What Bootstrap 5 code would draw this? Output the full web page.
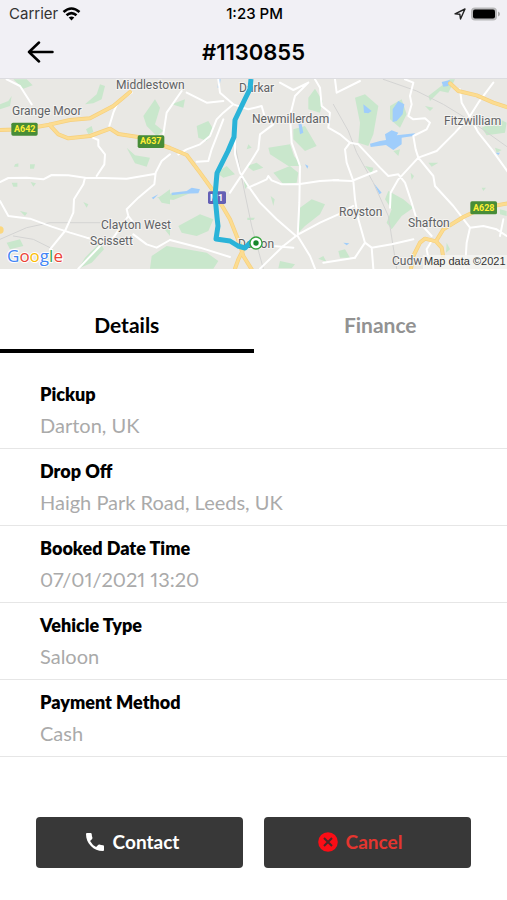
<!DOCTYPE html>
<html lang="en">
<head>
<meta charset="utf-8">
<meta name="viewport" content="width=device-width, initial-scale=1">
<title>Booking #1130855</title>
<link href="https://cdn.jsdelivr.net/npm/bootstrap@5.3.0/dist/css/bootstrap.min.css" rel="stylesheet">
<style>
body{font-family:Lato,"Open Sans",sans-serif;color:#000;background:#fff}
.top-area{background:#f1f0f5;border-bottom:1px solid #dcdce0}
.status-line{font:500 15px/28px Inter,Roboto,sans-serif;padding:0 7px 0 9px}
.status-line .carrier{font-weight:400;color:#333}
.title-line{height:50px;padding:0 27px}
.title-line h1{font:600 22px/48px Inter,sans-serif}
.back-btn{width:27px;height:48px}
.side-slot{width:27px}
.map-view{display:block;width:100%;height:auto;background:#e9e8e4}
.map-view text{font-family:Roboto,sans-serif;font-size:12px;fill:#5f6265;stroke:#f4f3f0;stroke-width:2px;paint-order:stroke}
.map-view .road-no{font-size:9px;font-weight:700;fill:#ffee35;stroke:none}
.map-view .motorway{fill:#fff}
.map-view .credit{font-family:"Liberation Sans",sans-serif;font-size:11px;fill:#333}
.map-view .brand{font-family:"Open Sans",sans-serif;font-size:17px;font-weight:500;stroke:#fff}
.view-tabs{margin-top:27px}
.view-tabs .nav-link{border-radius:0;border-bottom:4px solid transparent;padding:14px 0 10px;font-size:21px;line-height:29px;font-weight:700;color:#929292}
.view-tabs .nav-link.active{background:none;color:#000;border-color:#000}
.trip-info{padding-top:19px}
.trip-info .list-group-item,.trip-info .list-group-item:last-child{padding:10px 40px 6px;border-width:0 0 1px;border-color:#e6e6e6;min-height:77px}
.trip-info dt{font-size:18px;line-height:24px;font-weight:800;color:#000}
.trip-info dd{font-size:20px;line-height:28px;margin:5px 0 0;color:#aaa;font-variant-numeric:proportional-nums}
.action-row{gap:21px;padding:60px 36px 30px}
.action-btn{background:#383838;color:#fff;font-size:19px;line-height:27px;font-weight:700;border-radius:4px;padding:11px 27px 13px 12px;border:0;gap:8px}
.action-btn:hover{background:#444;color:#fff}
.action-btn.stop-btn,.action-btn.stop-btn:hover{color:#e5352f}
</style>
<script src="https://cdn.jsdelivr.net/npm/bootstrap@5.3.0/dist/js/bootstrap.bundle.min.js"></script>
</head>
<body>
<header class="top-area">
  <div class="status-line row g-0">
    <div class="col carrier d-flex align-items-center gap-1">Carrier
      <svg width="19" height="14" viewBox="0 0 18 14" fill="none" stroke="#000" stroke-width="2.6" aria-hidden="true"><path d="M1 5Q9-2 17 5M4 8.3Q9 4 14 8.3"/><path d="M9 13.5L6.2 10.5Q9 8.4 11.8 10.5Z" fill="#000" stroke="none"/></svg>
    </div>
    <div class="col-auto">1:23 PM</div>
    <div class="col d-flex align-items-center justify-content-end gap-1">
      <svg width="12" height="12" viewBox="0 0 12 12" fill="none" stroke="#222" stroke-width="1.4" stroke-linejoin="round" aria-hidden="true"><path d="M1 5.8L11 1L6.5 11L5.8 6.2Z"/></svg>
      <svg width="30" height="14" viewBox="0 0 30 14" aria-hidden="true"><rect x="1" y=".5" width="26" height="13" rx="4" fill="#b8b8ba"/><rect x="3" y="2.5" width="22" height="9" rx="2" fill="#000"/><path d="M28 4.5Q30 5.4 30 7T28 9.5Z" fill="#aaa"/></svg>
    </div>
  </div>
  <div class="title-line d-flex align-items-start justify-content-between">
    <button type="button" class="back-btn btn p-0 border-0 d-flex align-items-center" aria-label="Back">
      <svg width="27" height="22" viewBox="0 0 27 22" fill="none" stroke="#000" stroke-width="2.5" stroke-linecap="round" stroke-linejoin="round"><path d="M25.500 11H2M12 1.500L2 11L12 20.500"/></svg>
    </button>
    <h1 class="m-0">#1130855</h1>
    <span class="side-slot"></span>
  </div>
</header>

<main>
  <svg class="map-view" viewBox="0 0 507 190" role="img" aria-label="Route map from Darton">
    <g transform="scale(.33333) translate(0 -9)" stroke-linecap="round" stroke-linejoin="round">
      <!-- woodland -->
      <g fill="#c9e7cc">
        <path d="M255 85L290 55L300 25L315 30L305 70L280 82ZM0 85L25 75L35 60L30 90L0 100ZM40 10L80 10L98 28L70 38ZM430 120L465 70L480 95L465 145L490 165L470 180L440 150ZM380 215L405 238L450 245L440 272L405 262ZM258 160L275 150L280 168L265 175ZM475 365L510 340V385L485 380ZM255 545L300 500L312 520L275 560L235 578ZM45 265L55 262V272L42 272ZM90 265H105L102 278H90ZM35 320H52V332H40ZM92 318L108 322L100 332ZM250 378L265 385L260 395ZM60 405L82 410L75 420ZM490 455L510 445V480ZM20 500L60 490L70 510L30 520Z"/>
        <path d="M535 450L600 415L640 430L625 465L590 480L545 470ZM455 540L500 510L560 520L620 530L655 555L640 578H450ZM590 150L625 135L640 160L620 195L595 185ZM515 85L555 70L550 95ZM470 365L520 350L570 352L520 372ZM650 290L680 270L705 295L670 305ZM805 215L870 205L882 240L905 270L865 270L810 235ZM820 290L870 270L895 290L890 320L850 325ZM880 160L915 150L950 210L915 225L880 190ZM925 65L945 38L968 75L960 110L925 100ZM900 395L935 370L975 385L960 415L915 450L895 470ZM740 270L770 260L790 275L760 285ZM745 205L755 215L740 220ZM812 360L824 370L820 390ZM742 425H765L760 432H742ZM840 555L885 565L875 577H835ZM730 300L745 325L735 340ZM955 548L970 540L980 558Z"/>
        <path d="M1065 65L1095 55L1135 90L1120 175L1105 210L1075 200L1080 140ZM1170 90L1205 70L1220 115L1200 155L1170 130ZM1285 60L1350 10H1365L1345 50L1320 45L1290 75ZM1445 155L1500 130L1520 140L1515 170L1460 178ZM1165 345L1210 370L1240 395L1205 420L1175 460L1160 440L1175 400L1155 370ZM1015 525L1035 520L1050 545L1020 545ZM1285 260L1315 260L1295 272ZM1095 270L1120 275L1115 295ZM1340 500L1350 520L1338 530ZM1180 225L1200 220L1195 240ZM1232 290L1242 300L1235 312ZM1445 335H1458L1450 345ZM1485 215L1505 222L1490 230ZM1275 90L1300 95L1290 105ZM1500 400L1520 405V420L1500 415Z"/>
      </g>
      <g fill="#9fcdfb">
        <path d="M455 365L475 355L460 370ZM515 350L560 345L575 335L600 340L595 352L550 353L515 358ZM655 10L662 10L658 35H653ZM895 140L905 145L910 170L900 175ZM915 265L925 270L922 278Z"/>
        <path d="M1090 85L1115 105L1105 112L1092 110ZM1178 100L1195 75L1213 85L1208 115L1190 135L1178 138ZM1110 203L1140 195L1158 192L1155 175L1175 163L1195 170L1190 178L1245 172L1240 180L1205 185L1205 205L1180 222L1158 207L1112 213ZM1325 18L1350 12L1345 30L1330 32ZM1120 320L1145 350L1138 355ZM1030 500L1048 502L1040 508ZM1487 230L1500 230L1495 237Z"/>
      </g>
      <!-- railways -->
      <g fill="none" stroke="#d4d4d3" stroke-width="3">
        <path d="M0 490L80 455L150 440H300M40 480L100 490L150 515M705 205L730 330L755 450L790 578M1000 85L1045 165L1070 230L1120 320L1165 420L1190 578M1150 10L1250 45L1330 85L1420 140L1525 215"/>
      </g>
      <!-- minor roads -->
      <g fill="none" stroke="#fff" stroke-width="6">
        <path d="M20 10L60 30L95 85M395 50L355 75L340 110L328 150M278 185L295 192V210L315 235L313 265L290 300M0 318L25 306L80 305L130 310L155 297L205 298L255 305L310 306L380 308L467 293M255 305L250 325L222 370L220 410L195 465L150 520M0 375L25 420L90 428L155 452L210 470L260 485L330 500M235 578L300 510L340 485L385 420L380 400L415 365L463 325L467 290L485 255L510 235M385 420L400 440M400 475L440 505L470 515L510 492M490 175L500 110L545 45"/>
        <path d="M655 10L660 50L700 85L670 110L650 130L630 180L600 205L560 220L535 235M670 75L620 80L560 50M700 85L745 100L785 90L795 125L820 145L780 175L775 220L750 260L690 350M590 257L625 255L635 220L670 130M705 180L705 235L720 290L745 330L780 380L830 430L888 480M745 335L800 310L805 300L815 313L845 325L895 325L960 315L1015 312M925 20L885 60L870 120L875 200L900 270L898 380L893 480L930 540L945 578M840 20L880 42L925 20M945 10L960 35L965 90L990 110L985 155L1020 175L1050 200M888 480L850 510L780 578M895 475L960 440L1015 415L1060 390M510 492L600 515L690 543M820 510L880 515M970 560L1065 545"/>
        <path d="M1010 50L1080 15M1005 10L1010 50M1215 10L1240 20L1230 60L1235 85L1225 120L1240 130L1275 127L1290 140L1280 160L1240 180L1247 220L1255 245L1300 300L1305 330L1360 390L1410 455L1400 500L1395 578M1050 200L1075 205L1140 275L1165 300L1195 295L1215 320L1235 380L1250 430L1295 480M1050 200L1035 220L1040 260L1060 315L1065 370L1075 430L1095 500L1115 515L1175 505L1240 490M1000 313L1055 315L1130 285M1170 395L1172 350L1195 310L1255 245L1310 225L1365 170L1410 120L1435 80L1480 20M1380 40L1385 80L1405 115L1435 170L1475 220L1525 290M1095 500L1065 545M1115 515L1120 578M1295 495L1280 520L1285 545M1410 455L1450 450L1490 460L1520 480M1510 430L1500 480"/>
      </g>
      <!-- major roads -->
      <g fill="none" stroke="#f6cf7c" stroke-width="12">
        <path id="major-roads" d="M0 162L70 160L148 146L210 132L270 127L340 90L390 48M148 146L175 175L205 187L270 180L330 158L355 174L420 184L510 216L560 237L600 290L640 345L690 430L718 500L730 540L755 580M730 520L715 550L705 578M1350 22L1375 45L1430 58L1480 80L1525 95M1233 578L1240 540L1260 500L1275 488L1308 496L1330 460L1390 423L1450 395L1525 382M1308 496L1325 515L1330 545"/>
      </g>
      <use href="#major-roads" fill="none" stroke="#fcdc90" stroke-width="8"/>
      <circle cx="0" cy="462" r="11" fill="#fbd77f"/>
      <rect x="34" y="140" width="79" height="39" rx="5" fill="#478c37"/>
      <rect x="413" y="178" width="80" height="38" rx="5" fill="#478c37"/>
      <rect x="1411" y="376" width="80" height="39" rx="5" fill="#478c37"/>
      <rect x="624" y="346" width="54" height="38" rx="5" fill="#6460b5"/>
    </g>
    <text x="116" y="10">Middlestown</text>
    <text x="12" y="36">Grange Moor</text>
    <text x="239" y="13">Darkar</text>
    <text x="252" y="44">Newmillerdam</text>
    <text x="444" y="46">Fitzwilliam</text>
    <text x="101" y="150">Clayton West</text>
    <text x="90" y="166">Scissett</text>
    <text x="339" y="137">Royston</text>
    <text x="408" y="148">Shafton</text>
    <text x="238" y="169">Darton</text>
    <text x="392" y="186">Cudw</text>
    <text class="road-no" x="14" y="53">A642</text>
    <text class="road-no" x="140" y="65">A637</text>
    <text class="road-no" x="473" y="132">A628</text>
    <text class="road-no motorway" x="210" y="122">M1</text>
    <path d="M251 0L250 10L245 20L235 41L234 58L228 72L217 94L215 117L217 138L218 147L216 160L230 162L238 167L245 169L252 162" fill="none" stroke="#2ab3d8" stroke-width="5" stroke-linejoin="round"/>
    <circle cx="256" cy="164" r="6" fill="#fff" stroke="#36a53e" stroke-width="1.3"/><circle cx="256" cy="164" r="2.7" fill="#16862a"/>
    <rect x="423" y="176" width="84" height="14" fill="#f5f5f3" opacity=".8"/>
    <text class="credit" x="424" y="186">Map data ©2021</text>
    <text class="brand" x="7" y="183"><tspan fill="#4285f4">G</tspan><tspan fill="#ea4335">o</tspan><tspan fill="#fbbc05">o</tspan><tspan fill="#4285f4">g</tspan><tspan fill="#34a853">l</tspan><tspan fill="#ea4335">e</tspan></text>
  </svg>

  <ul class="view-tabs nav nav-pills nav-justified" role="tablist">
    <li class="nav-item" role="presentation"><button class="nav-link active" type="button" role="tab" aria-selected="true">Details</button></li>
    <li class="nav-item" role="presentation"><button class="nav-link" type="button" role="tab" aria-selected="false">Finance</button></li>
  </ul>

  <dl class="trip-info list-group list-group-flush m-0">
    <div class="list-group-item"><dt>Pickup</dt><dd>Darton, UK</dd></div>
    <div class="list-group-item"><dt>Drop Off</dt><dd>Haigh Park Road, Leeds, UK</dd></div>
    <div class="list-group-item"><dt>Booked Date Time</dt><dd>07/01/2021 13:20</dd></div>
    <div class="list-group-item"><dt>Vehicle Type</dt><dd>Saloon</dd></div>
    <div class="list-group-item"><dt>Payment Method</dt><dd>Cash</dd></div>
  </dl>

  <div class="action-row d-flex">
    <button type="button" class="action-btn btn flex-fill w-50 d-flex align-items-center justify-content-center">
      <svg width="20" height="20" viewBox="0 0 20 20" fill="#fff" aria-hidden="true"><path d="M2 1H5.600Q6.600 1 6.700 2Q6.800 4 7.400 5.600Q7.600 6.400 7.100 6.900L5.100 8.900Q7.200 12.900 11.100 14.900L13.100 12.900Q13.600 12.400 14.400 12.600Q16 13.200 18 13.300Q19 13.400 19 14.400V18Q19 19 18 19C8.500 19 1 11.500 1 2Q1 1 2 1Z"/></svg>Contact
    </button>
    <button type="button" class="action-btn stop-btn btn flex-fill w-50 d-flex align-items-center justify-content-center">
      <svg width="20" height="20" viewBox="0 0 20 20" aria-hidden="true"><circle cx="10" cy="10" r="9.800" fill="#fb0d16"/><path d="M6 6L14 14M14 6L6 14" stroke="#4a2a2a" stroke-width="2"/></svg>Cancel
    </button>
  </div>
</main>
</body>
</html>
